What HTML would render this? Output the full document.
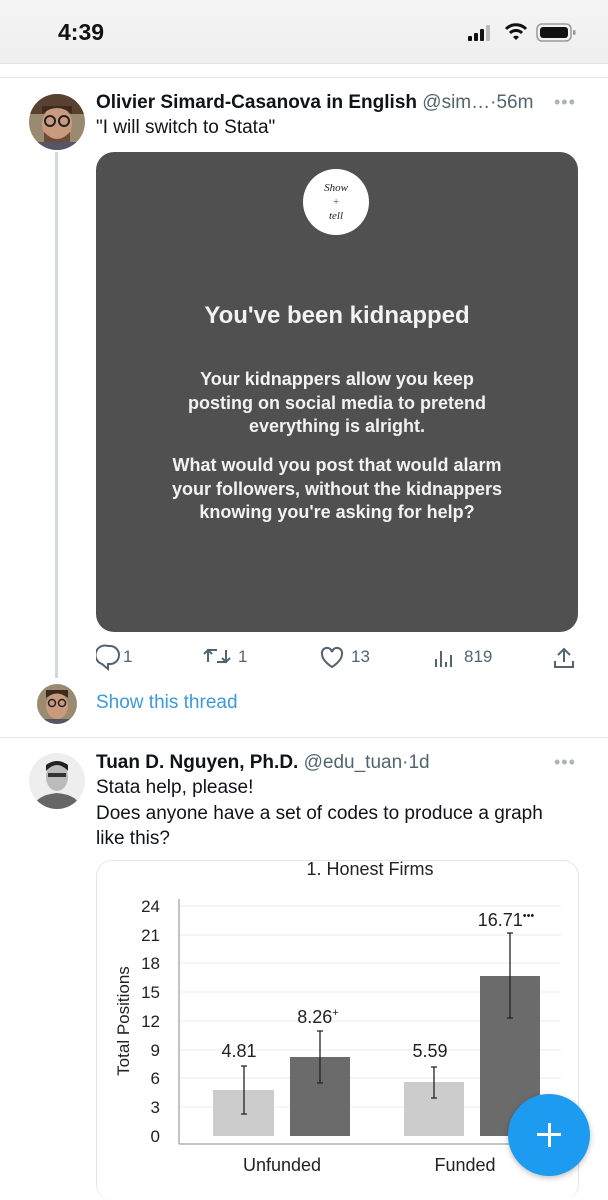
<!DOCTYPE html>
<html><head><meta charset="utf-8"><style>
*{margin:0;padding:0;box-sizing:border-box}
body{width:608px;height:1200px;overflow:hidden;background:#fff;font-family:"Liberation Sans",sans-serif;position:relative;color:#0f1419}
.a{position:absolute}
.t{white-space:nowrap}
</style></head><body>
<div class="a" style="left:0;top:0;width:608px;height:64px;background:linear-gradient(#f4f4f4,#efefef);border-bottom:1px solid #e2e2e2"></div>
<div class="a t" style="left:58px;top:19px;font-size:23px;font-weight:bold;color:#111">4:39</div>
<svg class="a" style="left:466px;top:24px" width="30" height="18"><rect x="2" y="12" width="4" height="5" rx="1" fill="#111"/><rect x="8" y="9" width="4" height="8" rx="1" fill="#111"/><rect x="14" y="5" width="4" height="12" rx="1" fill="#111"/><rect x="20" y="1" width="4" height="16" rx="1" fill="#bbb"/></svg>
<svg class="a" style="left:504px;top:22px" width="24" height="20"><path d="M2 7a14 14 0 0 1 20 0" stroke="#111" stroke-width="3" fill="none"/><path d="M6 11a8.5 8.5 0 0 1 12 0" stroke="#111" stroke-width="3" fill="none"/><path d="M9 15l3 3 3-3a4 4 0 0 0-6 0z" fill="#111"/></svg>
<svg class="a" style="left:536px;top:23px" width="42" height="20"><rect x="1" y="1" width="34" height="17" rx="5" fill="none" stroke="#999" stroke-width="1.5"/><rect x="4" y="4" width="28" height="11" rx="3" fill="#111"/><rect x="37" y="7" width="2.5" height="5" rx="1" fill="#999"/></svg>
<div class="a" style="left:0;top:77px;width:608px;height:1px;background:#e6e6e6"></div>

<svg class="a" style="left:29px;top:94px" width="56" height="56"><clipPath id="c1"><circle cx="28" cy="28" r="28"/></clipPath><g clip-path="url(#c1)"><rect width="56" height="56" fill="#9a8a70"/><rect x="0" y="0" width="56" height="20" fill="#5a4030"/><ellipse cx="28" cy="30" rx="15" ry="18" fill="#c99a7e"/><path d="M13 20q15-12 30 0v-8H13z" fill="#3a2a20"/><path d="M15 38q13 14 26 0v10H15z" fill="#6b4c3a"/><circle cx="21" cy="27" r="5" fill="none" stroke="#222" stroke-width="2"/><circle cx="35" cy="27" r="5" fill="none" stroke="#222" stroke-width="2"/><rect x="0" y="48" width="56" height="8" fill="#556"/></g></svg>
<div class="a" style="left:55px;top:152px;width:3px;height:526px;background:#cfd9de"></div>
<div class="a t" style="left:96px;top:92px;font-size:19px"><b>Olivier Simard-Casanova in English</b> <span style="color:#536471">@sim…·56m</span></div>
<div class="a t" style="left:554px;top:92px;font-size:18px;color:#aab4bc;letter-spacing:1px">•••</div>
<div class="a t" style="left:96px;top:117px;font-size:19px">"I will switch to Stata"</div>

<div class="a" style="left:96px;top:152px;width:482px;height:480px;border-radius:18px;background:#505050;color:#f2f2f2;text-align:center">
<div class="a" style="left:207px;top:17px;width:66px;height:66px;border-radius:50%;background:#fff;font-family:'Liberation Serif',serif;font-style:italic;font-size:11px;color:#222;line-height:14px;padding-top:12px">Show<br><span style="color:#b0207a">+</span><br>tell</div>
<div class="a t" style="left:0;width:482px;top:150px;font-size:24px;font-weight:bold">You've been kidnapped</div>
<div class="a" style="left:0;width:482px;top:216px;font-size:18px;line-height:23.5px;font-weight:bold">Your kidnappers allow you keep<br>posting on social media to pretend<br>everything is alright.</div>
<div class="a" style="left:0;width:482px;top:302px;font-size:18px;line-height:23.5px;font-weight:bold">What would you post that would alarm<br>your followers, without the kidnappers<br>knowing you're asking for help?</div>
</div>

<svg class="a" style="left:96px;top:643px" width="480" height="28" fill="none" stroke="#536471" stroke-width="2">
<path d="M12 3h2a9 9 0 0 1 0 18h-2v5l-6-5a9 9 0 0 1 6-18z"/>
<path d="M112 19V7h9M108 11l4-4 4 4M130 7v12h-9M126 15l4 4 4-4"/>
<path d="M236 24s-10-6-10-13a5 5 0 0 1 10-2 5 5 0 0 1 10 2c0 7-10 13-10 13z"/>
<path d="M340 24v-8M345 24V8M350 24v-5M355 24V12"/>
<path d="M468 6v13M462 12l6-6 6 6M459 18v6h18v-6"/>
</svg>
<div class="a t" style="left:123px;top:647px;font-size:17px;color:#536471">1</div>
<div class="a t" style="left:238px;top:647px;font-size:17px;color:#536471">1</div>
<div class="a t" style="left:351px;top:647px;font-size:17px;color:#536471">13</div>
<div class="a t" style="left:464px;top:647px;font-size:17px;color:#536471">819</div>

<svg class="a" style="left:37px;top:684px" width="40" height="40"><clipPath id="c2"><circle cx="20" cy="20" r="20"/></clipPath><g clip-path="url(#c2)"><rect width="40" height="40" fill="#9a8a70"/><ellipse cx="20" cy="22" rx="11" ry="13" fill="#c99a7e"/><path d="M9 14q11-9 22 0v-8H9z" fill="#3a2a20"/><circle cx="15" cy="19" r="3.5" fill="none" stroke="#222" stroke-width="1.5"/><circle cx="25" cy="19" r="3.5" fill="none" stroke="#222" stroke-width="1.5"/><rect x="0" y="35" width="40" height="5" fill="#556"/></g></svg>
<div class="a t" style="left:96px;top:692px;font-size:19px;color:#3b9ad9">Show this thread</div>
<div class="a" style="left:0;top:737px;width:608px;height:1px;background:#e6e6e6"></div>

<svg class="a" style="left:29px;top:753px" width="56" height="56"><clipPath id="c3"><circle cx="28" cy="28" r="28"/></clipPath><g clip-path="url(#c3)"><rect width="56" height="56" fill="#eee"/><path d="M4 56q2-14 24-16q22 2 24 16z" fill="#666"/><ellipse cx="28" cy="24" rx="11" ry="14" fill="#bbb"/><path d="M17 18q11-12 22 0v-6q-11-8-22 0z" fill="#222"/><rect x="19" y="20" width="18" height="4" fill="#333"/></g></svg>
<div class="a t" style="left:96px;top:752px;font-size:19px"><b>Tuan D. Nguyen, Ph.D.</b> <span style="color:#536471">@edu_tuan·1d</span></div>
<div class="a t" style="left:554px;top:752px;font-size:18px;color:#aab4bc;letter-spacing:1px">•••</div>
<div class="a" style="left:96px;top:775px;font-size:19px;line-height:25.5px">Stata help, please!<br>Does anyone have a set of codes to produce a graph<br>like this?</div>

<div class="a" style="left:96px;top:860px;width:483px;height:340px;border:1px solid #e3e6e8;border-radius:16px;border-bottom:none"></div>
<svg class="a" style="left:96px;top:855px" width="483" height="345" font-family="Liberation Sans" fill="#222">
<text x="274" y="20" font-size="18" text-anchor="middle">1. Honest Firms</text>
<g stroke="#eee" stroke-width="1"><line x1="83" x2="465" y1="51" y2="51"/><line x1="83" x2="465" y1="80" y2="80"/><line x1="83" x2="465" y1="108" y2="108"/><line x1="83" x2="465" y1="137" y2="137"/><line x1="83" x2="465" y1="166" y2="166"/><line x1="83" x2="465" y1="195" y2="195"/><line x1="83" x2="465" y1="223" y2="223"/><line x1="83" x2="465" y1="252" y2="252"/></g>
<g font-size="17" text-anchor="end"><text x="64" y="57">24</text><text x="64" y="86">21</text><text x="64" y="114">18</text><text x="64" y="143">15</text><text x="64" y="172">12</text><text x="64" y="201">9</text><text x="64" y="229">6</text><text x="64" y="258">3</text><text x="64" y="287">0</text></g>
<text transform="translate(33,166) rotate(-90)" font-size="17" text-anchor="middle">Total Positions</text>
<line x1="83" y1="44" x2="83" y2="289" stroke="#888"/><line x1="83" y1="289" x2="465" y2="289" stroke="#888"/>
<rect x="117" y="235" width="61" height="46" fill="#ccc"/>
<rect x="194" y="202" width="60" height="79" fill="#6b6b6b"/>
<rect x="308" y="227" width="60" height="54" fill="#ccc"/>
<rect x="384" y="121" width="60" height="160" fill="#6b6b6b"/>
<g stroke="#222" stroke-width="1.3"><path d="M148 211v48M145 211h6M145 259h6"/><path d="M224 176v52M221 176h6M221 228h6"/><path d="M338 212v31M335 212h6M335 243h6"/><path d="M414 78v85M411 78h6M411 163h6"/></g>
<g font-size="18" text-anchor="middle"><text x="143" y="202">4.81</text><text x="222" y="168">8.26<tspan font-size="11" dy="-7">+</tspan></text><text x="334" y="202">5.59</text><text x="410" y="71">16.71<tspan font-size="11" dy="-7">•••</tspan></text></g>
<g font-size="18" text-anchor="middle"><text x="186" y="316">Unfunded</text><text x="369" y="316">Funded</text></g>
</svg>

<div class="a" style="left:508px;top:1094px;width:82px;height:82px;border-radius:50%;background:#1d9bf0;box-shadow:0 2px 6px rgba(0,0,0,.25)"></div>
<div class="a" style="left:537px;top:1133px;width:24px;height:3px;background:#fff"></div>
<div class="a" style="left:547.5px;top:1123px;width:3px;height:24px;background:#fff"></div>
</body></html>
